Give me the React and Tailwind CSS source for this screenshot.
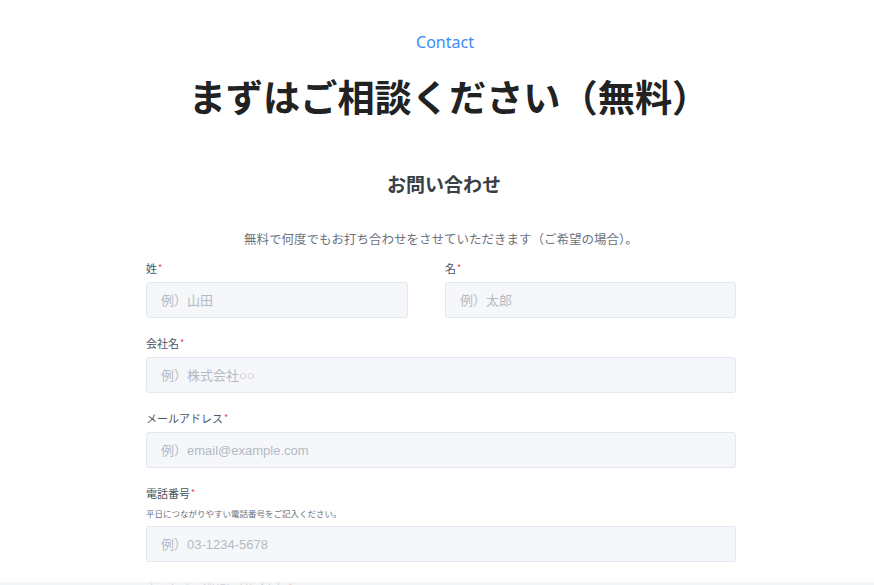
import { useState } from "react";

const jp = { fontFamily: '"Noto Sans CJK JP", sans-serif' };

const Label = ({ children, className = "" }) => (
  <label className={`block text-[11px] leading-[16px] text-[#4b5563] ${className}`}>
    {children}
    <span className="text-[#ef4444] text-[9px] align-top ml-[1px]">*</span>
  </label>
);

const Field = ({ placeholder, type = "text" }) => {
  const [value, setValue] = useState("");
  return (
    <input
      type={type}
      value={value}
      onChange={(e) => setValue(e.target.value)}
      placeholder={placeholder}
      className="block w-full h-[36px] px-[14px] text-[13px] rounded-[3px] border border-[#e2e8f0] bg-[#f5f7fa] text-[#374151] placeholder:text-[#b4bac2] outline-none"
      style={{ fontFamily: '"Liberation Sans", "Noto Sans CJK JP", sans-serif' }}
    />
  );
};

const App = () => {
  return (
    <div className="relative min-h-screen w-full bg-white pl-[8px]" style={jp}>
      {/* header */}
      <section className="flex flex-col items-center pt-[30px]">
        <p className="ml-[8px] text-[16px] leading-[24px] text-[#3b8cf5]" style={{ fontFamily: '"Noto Sans", sans-serif' }}>
          Contact
        </p>
        <h1 className="mt-[18px] ml-[16px] text-[37.2px] leading-[48px] font-bold text-[#222]">
          まずはご相談ください（無料）
        </h1>
      </section>

      {/* form */}
      <section className="w-[590px] mx-auto">
        <h2 className="mt-[50px] ml-[6px] text-center text-[19px] leading-[28px] font-bold text-[#3a3f47]">
          お問い合わせ
        </h2>
        <p className="mt-[32px] text-center text-[12.5px] leading-[18px] text-[#6b7280]">
          無料で何度でもお打ち合わせをさせていただきます（ご希望の場合）。
        </p>

        <div className="mt-[12px] grid grid-cols-[262px_291px] gap-x-[37px]">
          <div>
            <Label className="mb-[6px]">姓</Label>
            <Field placeholder="例）山田" />
          </div>
          <div>
            <Label className="mb-[6px]">名</Label>
            <Field placeholder="例）太郎" />
          </div>
        </div>

        <div className="mt-[17px]">
          <Label className="mb-[6px]">会社名</Label>
          <Field placeholder="例）株式会社○○" />
        </div>

        <div className="mt-[17px]">
          <Label className="mb-[6px]">メールアドレス</Label>
          <Field type="email" placeholder="例）email@example.com" />
        </div>

        <div className="mt-[17px]">
          <Label>電話番号</Label>
          <p className="mt-[6px] mb-[6px] text-[8.5px] leading-[13px] text-[#6b7280]">
            平日につながりやすい電話番号をご記入ください。
          </p>
          <Field type="tel" placeholder="例）03-1234-5678" />
        </div>

        <div className="mt-[17px] pb-[40px]">
          <Label className="mb-[6px]">ホームページURL（サイト）</Label>
          <Field placeholder="例）https://example.com" />
        </div>
      </section>

      <div className="fixed bottom-0 left-0 right-0 h-[3px] bg-[#f1f3f5]/80" />
    </div>
  );
};

export default App;
